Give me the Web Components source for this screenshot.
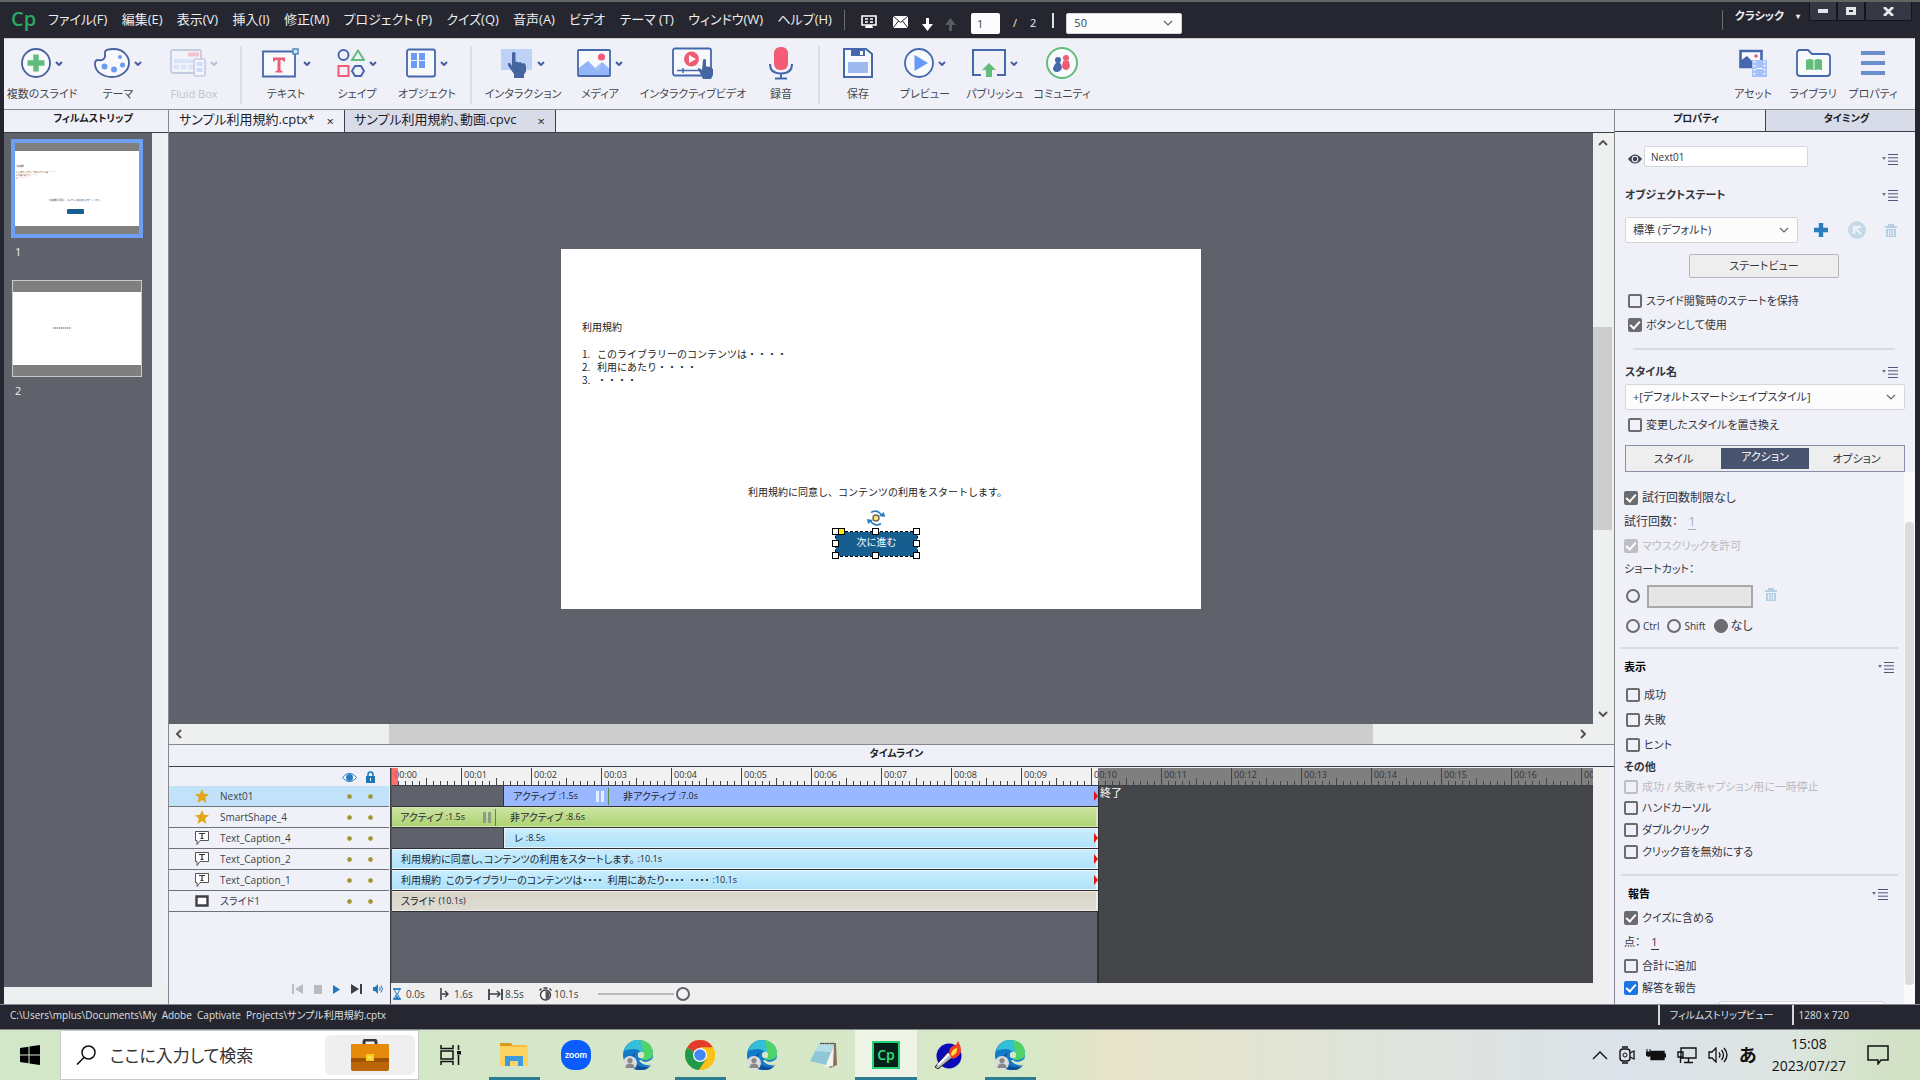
<!DOCTYPE html>
<html lang="ja">
<head>
<meta charset="utf-8">
<title>Captivate</title>
<style>
    html, body {
        margin: 0;
        height: 100%;
    }

    body {
        display: grid;
        grid-template-rows: minmax(0, 1fr) auto;
        overflow: hidden;
        font: 12px/16px "Open Sans", "Noto Sans CJK JP", sans-serif;
        font-feature-settings: "palt";
        color: #3c3f48;
        --chrome: #25262f;
        --panel: #f0f1f8;
        --panel-off: #d8dbe8;
        --line: #85888f;
        --stage: #5f626a;
    }
</style>
</head>
<body>
<editor-window></editor-window>
<task-bar></task-bar>

<script>
const icons = {
    // small controls
    chevron: ['0 0 8 5', '<path d="M1 1l3 3 3-3" fill="none" stroke="#46609f" stroke-width="2"/>'],
    down: ['0 0 10 6', '<path d="M1 1l4 4 4-4" fill="none" stroke="#666" stroke-width="1.2"/>'],
    eye: ['0 0 14 10', '<path d="M0 5Q7-4 14 5 7 14 0 5z" fill="#3f4356"/><circle cx="7" cy="5" r="2.8" fill="none" stroke="#f0f1f8" stroke-width="1.1"/>'],
    list: ['0 0 16 11', '<path d="M0 3h4L2 6z" fill="#6d7390"/><path d="M6 .5h10M6 3.8h10M6 7.2h10M6 10.5h10" stroke="#50567a" stroke-width="1"/>'],
    plus: ['0 0 14 14', '<path d="M7 0v14M0 7h14" stroke="#2b7dbd" stroke-width="4.4"/>'],
    reset: ['0 0 18 18', '<circle cx="9" cy="9" r="9" fill="#c3d9e8"/><path d="M6 13V6h7M6 6l7 7" fill="none" stroke="#f0f1f8" stroke-width="2.4"/>'],
    trash: ['0 0 12 13', '<path d="M3 0h6v2h3v2H0V2h3zM1 5h10v8H1z" fill="#b3d0e4"/><path d="M3.5 6v6M6 6v6M8.500 6v6" stroke="#f0f1f8"/>'],
    // title bar
    display: ['0 0 16 14', '<path d="M1 1h14v9H1z" fill="none" stroke="#fff" stroke-width="1.6"/><path d="M4 4h3M9 4h3M4 7h3M9 7h3" stroke="#fff" stroke-width="1.4"/><path d="M5 10h6l1 3H4z" fill="#fff"/>'],
    mail: ['0 0 15 12', '<path d="M0 0h15v12H0z" fill="#fff"/><path d="M0 0l7.500 6.500L15 0M0 12l5.500-7M15 12L9.500 5" fill="none" stroke="#25262f"/>'],
    arrowdown: ['0 0 11 13', '<path d="M4 0h3v6h4l-5.500 7L0 6h4z" fill="#fff"/>'],
    arrowup: ['0 0 11 13', '<path d="M4 13h3V7h4L5.500 0 0 7h4z" fill="#595a62"/>'],
    min: ['0 0 10 4', '<path d="M0 0h10v4H0z" fill="#e4e6ea"/>'],
    max: ['0 0 10 8', '<path d="M1.500 1.500h7v5h-7z" fill="none" stroke="#e4e6ea" stroke-width="3"/>'],
    close: ['0 0 11 9', '<path d="M1 0l9 9M10 0L1 9" stroke="#e4e6ea" stroke-width="2.8"/>'],
    // tool bar
    slides: ['0 0 30 30', '<circle cx="15" cy="15" r="14" fill="#f8f9fd" stroke="#46609f" stroke-width="1.800"/><path d="M15 6.500v17M6.500 15h17" stroke="#62bd7c" stroke-width="5.500"/>'],
    theme: ['0 0 36 30', '<path d="M4 12c4 1 8-1 7-6s5-5 9-5c9 0 15 7 15 14s-7 14-17 14S1 23 1 16c0-3 1-4 3-4z" fill="#f8f9fd" stroke="#46609f" stroke-width="1.800"/><g fill="#6c9bf5"><circle cx="10.500" cy="18.500" r="3"/><circle cx="20" cy="21.500" r="3"/><circle cx="28.500" cy="17" r="2.500"/><circle cx="26" cy="9" r="2"/></g>'],
    fluid: ['0 0 36 28', '<rect x="1" y="1" width="30" height="23" rx="2" fill="#f1f3fa" stroke="#c5cce0" stroke-width="1.800"/><path d="M18 3.500h11v4H18z" fill="#f5c3cb"/><path d="M4 10h26v4H4zM4 16h5v4H4zM11 16h5v4h-5zM18 16h5v4h-5z" fill="#dce5f8"/><rect x="24" y="10" width="11" height="17" rx="2" fill="#f4f6fc" stroke="#c5cce0" stroke-width="1.600"/><path d="M26.500 13h6v4h-6zM26.500 19h6v4h-6z" fill="#cddcf8"/>'],
    text: ['0 0 37 30', '<path d="M1 3.500h32v25H1z" fill="#f8f9fd" stroke="#4468ab" stroke-width="1.800"/><path d="M11 9.500h12v4h-1.500l-1-1.500h-2v10.500l2 .500v1.500h-7V23l2-.500V12h-2l-1 1.500H11z" fill="#ef5d75"/><path d="M31 1h5v5h-5z" fill="#cfe4f5" stroke="#4c8bbd" stroke-width="1.500"/>'],
    shapes: ['0 0 28 28', '<g fill="none" stroke-width="2"><circle cx="6.500" cy="6" r="5" stroke="#4468ab"/><path d="M21 1.500L27 11H15z" stroke="#62bd7c"/><path d="M1.500 17h10v10h-10z" stroke="#ef5d75"/><path d="M18 17h6l3 5-3 5h-6l-3-5z" stroke="#4468ab"/></g>'],
    objects: ['0 0 30 30', '<rect x="1" y="1.500" width="28" height="27" rx="2" fill="#f8f9fd" stroke="#4468ab" stroke-width="1.800"/><path d="M5 5h6v7H5zM13 5h6v7h-6zM5 13h6v7H5zM13 13h6v7h-6z" fill="#6c9bf5"/>'],
    touch: ['0 0 32 30', '<path d="M0 1h31v21H0z" fill="#bed2f8"/><path d="M11 5q2-2 3.500 0v9l1-.500 2 1 2-.500 1.500 1.500 2-.500q2 1 2 3.500v5l-2 3v3.500H13V26l-5-7q-2-3-.500-4t3.500 3z" fill="#44659f"/>'],
    media: ['0 0 34 28', '<rect x="1" y="1" width="32" height="26" rx="1" fill="#f8f9fd" stroke="#4468ab" stroke-width="1.800"/><path d="M2 26V19l9-7 7 7 7-6 7 6v7z" fill="#a5c3fa"/><path d="M11 12l14 14H2v-7zM25 13l7 7v6H20z" fill="#86adf4" opacity=".6"/><circle cx="24.500" cy="8" r="3.600" fill="#ef5d75"/>'],
    video: ['0 0 42 32', '<rect x="1" y="1.500" width="38" height="27" rx="2" fill="#f8f9fd" stroke="#4468ab" stroke-width="1.800"/><circle cx="19.500" cy="12" r="7.500" fill="#ef5d75"/><path d="M17 8v8l7-4z" fill="#fff"/><path d="M5 23.500h24M11 21v5" stroke="#4468ab" stroke-width="1.500"/><path d="M31 13q1.500-2 3 0v7l1-1 1.500 1 1.500-.500 1.500 1.500 1.500 1v6l-2 4h-8l-4-8q-2-3 0-3l3 2z" fill="#44659f"/>'],
    mic: ['0 0 24 33', '<rect x="5" y="0" width="14" height="23" rx="6" fill="#f25c75"/><path d="M1 17c0 6 4 9.500 11 9.500S23 23 23 17M12 26v5M6 31.500h12" fill="none" stroke="#4468ab" stroke-width="2"/>'],
    save: ['0 0 30 30', '<path d="M1 1h22l6 5v23H1z" fill="#f8f9fd" stroke="#4468ab" stroke-width="2"/><path d="M8 1h14v7H8z" fill="#4468ab"/><path d="M17 3h3v4h-3z" fill="#f8f9fd"/><path d="M5 14h20v11H5z" fill="#9db9ee"/>'],
    preview: ['0 0 30 30', '<circle cx="15" cy="15" r="14" fill="#f8f9fd" stroke="#4468ab" stroke-width="1.800"/><path d="M10.500 7v16L24 15z" fill="#6699f8"/>'],
    publish: ['0 0 34 30', '<path d="M9 27H1V2h32v25h-8" fill="none" stroke="#4468ab" stroke-width="2"/><path d="M17 15l7 7h-4v7h-6v-7h-4z" fill="#62bd7c"/>'],
    community: ['0 0 34 32', '<circle cx="17" cy="16" r="15" fill="#f8f9fd" stroke="#62bd7c" stroke-width="2"/><path d="M10 17q3-4 6 0l1 4q-2 4-5 4-4 0-4-4z" fill="#4468ab"/><circle cx="13" cy="13" r="3" fill="#4468ab"/><circle cx="21" cy="11" r="3" fill="#ef5d75"/><path d="M18 14h6l1 5q-1 4-4 4-4-1-4-4z" fill="#ef5d75"/>'],
    asset: ['0 0 29 28', '<path d="M1.500 2h21v16h-21z" fill="#f8f9fd" stroke="#4468ab" stroke-width="2.600"/><path d="M1 18v-6l7-5 5 5v6z" fill="#4468ab"/><circle cx="17" cy="7" r="1.800" fill="#ef5d75"/><path d="M13 11h15v17H13z" fill="#a5c3fa"/><path d="M15.500 12v15M25.500 12v15" stroke="#fff" stroke-width="1.800" stroke-dasharray="1.500 2.500"/><path d="M17.500 19.500h6" stroke="#fff"/>'],
    library: ['0 0 35 28', '<path d="M1 4q0-3 3-3h8l4 4h15q3 0 3 3v16q0 3-3 3H4q-3 0-3-3z" fill="#f8f9fd" stroke="#4468ab" stroke-width="1.800"/><path d="M10 11q4-2 7.500 0v10q-4-1-7.500 0zM18.500 11q4-2 7.500 0v10q-4-1-7.500 0z" fill="#62bd7c"/>'],
    props: ['0 0 24 24', '<path d="M0 2h24M0 12h24M0 22h24" stroke="#698ecb" stroke-width="4"/>'],
    // timeline
    eyeblue: ['0 0 15 11', '<path d="M.500 5.500Q7.500-3 14.500 5.500 7.500 14 .500 5.500z" fill="#fff" stroke="#2b7dbd"/><circle cx="7.500" cy="5.500" r="3.500" fill="#2b7dbd"/>'],
    lock: ['0 0 9 12', '<path d="M0 5h9v7H0z" fill="#1f76b5"/><path d="M2 5V3.500q0-2.500 2.500-2.500T7 3.500V5" fill="none" stroke="#1f76b5" stroke-width="1.500"/><path d="M4.500 7v3" stroke="#fff"/>'],
    star: ['0 0 14 14', '<path d="M7 0l2 4.800 5 .4-3.800 3.300L11.400 14 7 11l-4.400 3 1.200-5.500L0 5.200l5-.4z" fill="#e3a51a"/>'],
    caption: ['0 0 14 14', '<path d="M.500.500h13v9H5l-3 4v-4H.500z" fill="#fff" stroke="#555"/><path d="M4 2.500h6M7 2.500v5M5.500 7.500h3" stroke="#333" stroke-width="1.200"/>'],
    frame: ['0 0 14 12', '<path d="M1.500 1.500h11v9h-11z" fill="#fff" stroke="#3c3f48" stroke-width="2.400"/>'],
    first: ['0 0 11 10', '<path d="M1 0v10" stroke="#b9bbc1" stroke-width="2"/><path d="M11 0v10L3 5z" fill="#b9bbc1"/>'],
    stop: ['0 0 8 9', '<path d="M0 0h8v9H0z" fill="#b9bbc1"/>'],
    play: ['0 0 7 9', '<path d="M0 0l7 4.500L0 9z" fill="#2079c0"/>'],
    last: ['0 0 11 10', '<path d="M10 0v10" stroke="#3c3f48" stroke-width="2"/><path d="M0 0v10l8-5z" fill="#3c3f48"/>'],
    sound: ['0 0 11 10', '<path d="M0 3h2l3-3v10L2 7H0z" fill="#2079c0"/><path d="M6.500 3q1.500 2 0 4M8 1.500q3 3.500 0 7" fill="none" stroke="#2079c0"/>'],
    hourglass: ['0 0 8 12', '<path d="M0 1h8M0 11h8" stroke="#2079c0" stroke-width="1.600"/><path d="M1 1h6L4.500 6 7 11H1l2.500-5z" fill="none" stroke="#2079c0"/><path d="M4 7l2 4H2z" fill="#2079c0"/>'],
    starts: ['0 0 9 12', '<path d="M1 0v12" stroke="#3c3f48" stroke-width="1.600"/><path d="M2 6h5M5 3l3 3-3 3" fill="none" stroke="#3c3f48" stroke-width="1.400"/>'],
    length: ['0 0 15 12', '<path d="M1 1v11M14 1v11" stroke="#3c3f48" stroke-width="1.800"/><path d="M2 6h9M9 3l3 3-3 3" fill="none" stroke="#3c3f48" stroke-width="1.400"/>'],
    watch: ['0 0 13 14', '<circle cx="6.500" cy="8" r="5" fill="#fff" stroke="#3c3f48" stroke-width="1.400"/><path d="M6.500 8V4q4 0 4 4t-4 4z" fill="#555"/><path d="M4.500 1h4M.500 3.500l2-2M12.500 3.500l-2-2" stroke="#3c3f48" stroke-width="1.400"/>'],
    rotate: ['0 0 20 16', '<circle cx="10" cy="8" r="3" fill="#ffe56b" stroke="#666" stroke-width="1.400"/><path d="M5 2.500q6-4 11 3M15 13.500q-6 4-11-3" fill="none" stroke="#2b7dbd" stroke-width="1.600"/><path d="M13 6l6 1-1-5zM7 10l-6-1 1 5z" fill="#2b7dbd"/>'],
    // task bar
    windows: ['0 0 20 20', '<path d="M0 3l8.500-1.200v7.700H0zM9.500 1.600L20 0v9.500H9.500zM0 10.500h8.500v7.700L0 17zM9.500 10.500H20V20L9.500 18.400z" fill="#000"/>'],
    search: ['0 0 20 20', '<circle cx="12.500" cy="7.500" r="6.500" fill="none" stroke="#111" stroke-width="1.500"/><path d="M8 12.500L1 19.500" stroke="#111" stroke-width="1.600"/>'],
    bag: ['0 0 38 32', '<path d="M13 5V3q0-2 2-2h8q2 0 2 2v2" fill="none" stroke="#343a44" stroke-width="3"/><rect y="5" width="38" height="27" rx="2" fill="#b96508"/><path d="M0 7q0-2 2-2h34q2 0 2 2v12H0z" fill="#e68a0c"/><path d="M0 19h38v4H0z" fill="#9d5204"/><path d="M15 15h8v7h-8z" fill="#f7cc1b"/><path d="M17.500 17.500h3v2h-3z" fill="#fbe98a"/>'],
    taskview: ['0 0 22 20', '<path d="M1 0v3.500h12V0M1 20v-3.500h12V20M1 6h12v8H1zM18.500 0v5M18.500 10v10" fill="none" stroke="#111" stroke-width="1.500"/><path d="M17 6h4v3.500h-4z" fill="#111"/>'],
    explorer: ['0 0 28 24', '<path d="M0 0h11l2 3H0z" fill="#d59a17"/><path d="M0 3h28v20H0z" fill="#fcd362"/><path d="M12 2h15v2H12z" fill="#f5be3c"/><path d="M5 13h18v10h-5v-5h-8v5H5z" fill="#3b9bdc"/>'],
    zoom: ['0 0 30 30', '<rect width="30" height="30" rx="13" fill="#0b5cff"/><text x="15" y="18" text-anchor="middle" font-family="Lato, sans-serif" font-weight="700" font-size="9" fill="#fff">zoom</text>'],
    edge: ['0 0 30 30', '<circle cx="15" cy="15" r="15" fill="#1479c8"/><path d="M1 11C4 3 10 0 15 0c9 0 15 6 15 13 0 5-4 7-8 7-3 0-5-1-4-3 2-3-1-8-7-8-5 0-8 1-10 2z" fill="#33c0d8"/><path d="M17 .200C25 1 30 6 30 13c0 5-4 7-8 7-3 0-5-1-4-3 3-4 2-11-1-16.800z" fill="#4fd268"/><path d="M13 12c-4 5-2 14 7 15 4 .500 7-1 8.500-3-3 7-11 7-15 5.500-7-3-9-12-.500-17.500z" fill="#0f4f9c"/><path d="M18 20c3 3 9 2 12-2l-1 6c-4 2-11 1-13-4z" fill="#d3e7c8"/><circle cx="18" cy="15" r="3.200" fill="#d3e7c8"/><circle cx="7" cy="23" r="7" fill="#dcdcdc"/><circle cx="7" cy="20.500" r="2.600" fill="#888"/><path d="M2.500 28q0-4.500 4.500-4.500t4.500 4.500z" fill="#888"/>'],
    chrome: ['0 0 30 30', '<circle cx="15" cy="15" r="15" fill="#fbc116"/><path d="M15 15L2 7.500A15 15 0 0 1 28 7.500H15z" fill="#e33b2e"/><path d="M2 7.500A15 15 0 0 0 14 30l7.500-11.500L15 15z" fill="#229a4b"/><path d="M15 7.500h13.100A15 15 0 0 1 14 30l8-11z" fill="#fbc116"/><circle cx="15" cy="15" r="7" fill="#fff"/><circle cx="15" cy="15" r="5.800" fill="#4285f4"/>'],
    notepad: ['0 0 28 26', '<path d="M10 1h16l1 22-7 3z" fill="#8a7258"/><path d="M24 3l-1 21-9 1z" fill="#f3f3ee"/><path d="M9 2h15l-8 21-16-4z" fill="#8fc7d6"/><path d="M9 2h15l-3 8-16-1z" fill="#b5dfe6"/><path d="M10 1.500h15" stroke="#555" stroke-width="1.500" stroke-dasharray="1.500 1"/>'],
    cp: ['0 0 28 28', '<path d="M1 1h26v26H1z" fill="#06211a" stroke="#25d276" stroke-width="2"/><text x="14" y="19" text-anchor="middle" font-family="Open Sans, sans-serif" font-weight="600" font-size="14" fill="#2be07f">Cp</text>'],
    torch: ['0 0 28 28', '<circle cx="15" cy="15" r="12.500" fill="#0a0ab8"/><path d="M1 26l13-15 5 5L4 28z" fill="#b9b9c0" stroke="#222"/><path d="M4 24l11-11" stroke="#fff" stroke-width="2"/><path d="M15 12q0-7 7-8l2-4q3 5 3 9t-4 7-5 1z" fill="#f1411f"/><path d="M17 13q1-5 6-6 1 5-5 8z" fill="#fde14a"/>'],
    up: ['0 0 16 9', '<path d="M1 8l7-7 7 7" fill="none" stroke="#111" stroke-width="1.400"/>'],
    meet: ['0 0 16 18', '<rect x="1" y="3" width="10" height="12" rx="3" fill="none" stroke="#111" stroke-width="1.400"/><circle cx="6" cy="9" r="2" fill="none" stroke="#111"/><path d="M11 7l4-2v8l-4-2M3 1h6M3 17h6" fill="none" stroke="#111" stroke-width="1.300"/>'],
    battery: ['0 0 20 14', '<path d="M5 3.500h13v8H5z" fill="#111" stroke="#111" stroke-width="1.400"/><path d="M18 6h2v3h-2zM1 1v3M4 1v3M0 4h5v3q-2.500 3-5 0z" fill="#111" stroke="#111"/>'],
    network: ['0 0 20 18', '<path d="M4 2h15v10H4zM11.500 12v4M7 16.500h9M1 6h5v5H1zM3.500 11v6" fill="none" stroke="#111" stroke-width="1.400"/>'],
    volume: ['0 0 20 16', '<path d="M1 5h3l4-4v14l-4-4H1z" fill="none" stroke="#111" stroke-width="1.300"/><path d="M11 5.500q2 2.500 0 5M13.500 3q4 5 0 10M16 1q6 7 0 14" fill="none" stroke="#111" stroke-width="1.300"/>'],
    note: ['0 0 22 20', '<path d="M1 1h20v14h-7l-3 4v-4H1z" fill="none" stroke="#111" stroke-width="1.500"/>']
}

// Every element here is static markup plus styles, so one helper builds them all.
const define = (name, css, html, connected) => {
    const template = document.createElement('template')
    template.innerHTML = `<style>* { box-sizing: border-box; } button, input, select { font: inherit; font-feature-settings: inherit; color: inherit; margin: 0; } button { border: 0; padding: 0; background: none; }${css}</style>${html}`

    window.customElements.define(name, class extends HTMLElement {
        constructor() {
            super()

            this
                .attachShadow({ mode: 'open' })
                .appendChild(template.content.cloneNode(true))
        }

        connectedCallback() {
            if (connected) connected(this, this.shadowRoot)
        }
    })
}

define('ui-icon', `
    :host { display: inline-flex; flex: none; }
    svg { display: block; }
`, '<svg xmlns="http://www.w3.org/2000/svg" aria-hidden="true"></svg>', (host, root) => {
    const [box, shapes] = icons[host.getAttribute('name')]
    const svg = root.querySelector('svg')
    svg.setAttribute('viewBox', box)
    svg.setAttribute('width', box.split(' ')[2])
    svg.setAttribute('height', box.split(' ')[3])
    svg.innerHTML = shapes
})

define('drop-down', `
    :host { display: grid; height: 26px; align-items: center; }
    select, ui-icon { grid-area: 1 / 1; }
    select {
        appearance: none;
        width: 100%;
        height: 100%;
        padding: 0 24px 0 7px;
        background: #fcfcfd;
        border: 1px solid #d5d6dc;
        border-radius: 2px;
    }
    ui-icon { justify-self: end; margin-right: 9px; pointer-events: none; }
`, '<select><option></option></select><ui-icon name="down"></ui-icon>', (host, root) => {
    root.querySelector('option').textContent = host.getAttribute('value')
    root.querySelector('select').setAttribute('aria-label', host.getAttribute('label'))
})

define('check-row', `
    :host { display: flex; align-items: center; height: 24px; }
    label { display: flex; align-items: center; gap: 4px; white-space: nowrap; }
    input {
        appearance: none;
        display: grid;
        place-items: center;
        flex: none;
        width: 14px;
        height: 14px;
        border: 2px solid #6b6c70;
        border-radius: 2px;
    }
    input:checked { background: #6b6c70; }
    input:checked::after {
        content: "";
        width: 8px;
        height: 4px;
        border: solid #fff;
        border-width: 0 0 2px 2px;
        transform: translateY(-1px) rotate(-48deg);
    }
    :host([accent]) input { background: #1b74e0; border-color: #1b74e0; }
    :host([disabled]) { color: #b9bac0; }
    :host([disabled]) input { border-color: #bebfc4; }
    :host([disabled]) input:checked { background: #bebfc4; }
`, '<label><input type="checkbox"><slot></slot></label>', (host, root) => {
    const input = root.querySelector('input')
    input.checked = host.hasAttribute('checked')
    input.disabled = host.hasAttribute('disabled')
})

define('menu-bar', `
    :host {
        display: flex;
        height: 38px;
        padding-left: 11px;
        border-top: 2px solid #5f6763;
        background: var(--chrome);
        color: #eceef2;
    }
    .logo { width: 37px; font: 600 20px/34px "Open Sans", sans-serif; color: #2ba862; }
    nav { display: flex; justify-content: space-between; align-items: center; width: 784px; height: 34px; font-size: 13px; }
    nav button { white-space: nowrap; }
    .tools { display: flex; align-items: center; font-size: 11px; }
    .rule { width: 1px; height: 20px; background: #6d6e76; }
    .rule.bright { width: 2px; height: 15px; background: #dedfe3; }
    .tools ui-icon { margin-top: 4px; }
    input { width: 29px; height: 21px; padding: 0 6px; border: 0; border-radius: 2px; background: #fcfcfd; color: #3c3f48; }
    .page { display: flex; align-items: center; gap: 13px; margin: 6px 16px 0 15px; }
    drop-down { width: 116px; height: 21px; margin: 6px 0 0 12px; color: #3c3f48; }
    .right { display: flex; margin-left: auto; gap: 9px; }
    .mode { display: flex; align-items: center; gap: 12px; height: 28px; padding-left: 12px; font-size: 11px; font-weight: 600; }
    .mode span { font-size: 8px; }
    .window { display: flex; margin-right: 8px; }
    .window button { width: 28px; height: 19px; border: solid #15161b; border-width: 0 1px 1px; background: #353842; display: grid; place-items: center; }
    .window button:last-child { width: 47px; }
`, `
    <span class="logo">Cp</span>
    <nav>
        <button>ファイル(F)</button><button>編集(E)</button><button>表示(V)</button>
        <button>挿入(I)</button><button>修正(M)</button><button>プロジェクト (P)</button>
        <button>クイズ(Q)</button><button>音声(A)</button><button>ビデオ</button>
        <button>テーマ (T)</button><button>ウィンドウ(W)</button><button>ヘルプ(H)</button>
    </nav>
    <div class="tools">
        <span class="rule" style="margin: 0 16px 0 12px"></span>
        <ui-icon name="display"></ui-icon>
        <ui-icon name="mail" style="margin-left: 16px"></ui-icon>
        <ui-icon name="arrowdown" style="margin-left: 14px; padding-top: 4px"></ui-icon>
        <ui-icon name="arrowup" style="margin-left: 12px; padding-top: 4px"></ui-icon>
        <span class="page"><input value="1" aria-label="スライド"><span>/</span><span>2</span></span>
        <span class="rule bright"></span>
        <drop-down label="倍率" value="50"></drop-down>
    </div>
    <div class="right">
        <span class="rule" style="margin: 8px -9px 0 0"></span>
        <button class="mode">クラシック<span>▾</span></button>
        <div class="window">
            <button aria-label="最小化"><ui-icon name="min"></ui-icon></button>
            <button aria-label="最大化"><ui-icon name="max"></ui-icon></button>
            <button aria-label="閉じる"><ui-icon name="close"></ui-icon></button>
        </div>
    </div>
`)

define('tool-button', `
    :host { display: block; flex: none; }
    button { display: flex; flex-direction: column; align-items: center; width: 100%; white-space: nowrap; }
    .icon { display: flex; align-items: center; justify-content: center; gap: 4px; height: 34px; }
    .label { margin-top: 6px; font-size: 11px; }
    :host([faded]) { color: #bfc2cd; }
    :host([faded]) .chevron { opacity: .35; }
`, '<button><span class="icon"></span><span class="label"><slot></slot></span></button>', (host, root) => {
    root.querySelector('.icon').innerHTML =
        `<ui-icon name="${host.getAttribute('icon')}"></ui-icon>` +
        (host.hasAttribute('menu') ? '<ui-icon class="chevron" name="chevron"></ui-icon>' : '')
})

define('tool-bar', `
    :host { display: flex; height: 71px; padding-top: 7px; border-top: 1px solid #c9c9c4; background: var(--panel); color: #45474f; }
    i { flex: none; width: 2px; height: 58px; margin: 0 8px; background: #dcdde0; }
    .w58 { width: 58px; } .w60 { width: 60px; } .w66 { width: 66px; } .w68 { width: 68px; } .w70 { width: 70px; }
    .w72 { width: 72px; } .w74 { width: 74px; } .w76 { width: 76px; } .w86 { width: 86px; } .w118 { width: 118px; }
    .push { margin-left: auto; }
`, `
    <tool-button class="w76" icon="slides" menu>複数のスライド</tool-button>
    <tool-button class="w76" icon="theme" menu>テーマ</tool-button>
    <tool-button class="w76" icon="fluid" menu faded>Fluid Box</tool-button>
    <i></i>
    <tool-button class="w72" icon="text" menu>テキスト</tool-button>
    <tool-button class="w70" icon="shapes" menu>シェイプ</tool-button>
    <tool-button class="w70" icon="objects" menu>オブジェクト</tool-button>
    <i></i>
    <tool-button class="w86" icon="touch" menu>インタラクション</tool-button>
    <tool-button class="w68" icon="media" menu>メディア</tool-button>
    <tool-button class="w118" icon="video">インタラクティブビデオ</tool-button>
    <tool-button class="w58" icon="mic">録音</tool-button>
    <i></i>
    <tool-button class="w60" icon="save">保存</tool-button>
    <tool-button class="w74" icon="preview" menu>プレビュー</tool-button>
    <tool-button class="w66" icon="publish" menu>パブリッシュ</tool-button>
    <tool-button class="w68" icon="community">コミュニティ</tool-button>
    <tool-button class="w60 push" icon="asset">アセット</tool-button>
    <tool-button class="w60" icon="library">ライブラリ</tool-button>
    <tool-button class="w60" style="margin-right: 12px" icon="props">プロパティ</tool-button>
`)

define('film-strip', `
    :host { display: grid; grid-template-rows: 23px minmax(0, 1fr) 17px; background: var(--panel); border-right: 1px solid var(--line); }
    h2 { margin: 0; padding-left: 14px; font-size: 10px; line-height: 17px; text-align: center; color: #1b1d24; border-bottom: 1px solid #3c3f48; }
    .body { display: grid; grid-template-columns: minmax(0, 1fr) 12px 4px; }
    .slides { background: var(--stage); padding: 6px 9px 0 7px; }
    .track { background: #eeeff0; }
    button { display: block; position: relative; width: 100%; height: 99px; border: 4px solid #6f9ff3; background: #7f7f7f; padding: 8px 0; }
    button + p + button { border: 1px solid #c9cacd; padding: 11px 0; height: 97px; width: 130px; margin-left: 1px; }
    .page { display: block; height: 100%; background: #fff; position: relative; font: 2px/3px "Noto Sans CJK JP", sans-serif; font-feature-settings: normal; text-align: left; color: #333; }
    .page span { position: absolute; white-space: nowrap; }
    .mini { left: 52px; top: 58px; width: 17px; height: 5px; border-radius: 1px; background: #165d90; }
    .dots { left: 40px; top: 35px; width: 18px; height: 2px; background: repeating-linear-gradient(90deg, #aaa 0 1px, #ddd 1px 2px); }
    p { margin: 0; padding: 6px 4px 20px; font-size: 11px; color: #eceef2; }
    .foot { background: #eeeff0; }
`, `
    <h2>フィルムストリップ</h2>
    <div class="body">
        <div class="slides">
            <button aria-label="スライド 1"><span class="page">
                <span style="left: 1px; top: 14px">利用規約</span>
                <span style="left: 1px; top: 20px">1. このライブラリーのコンテンツは・・・・<br>2. 利用にあたり・・・・<br>3. ・・・・</span>
                <span style="left: 34px; top: 48px">利用規約に同意し、コンテンツの利用をスタートします。</span>
                <span class="mini"></span>
            </span></button>
            <p>1</p>
            <button aria-label="スライド 2"><span class="page"><span class="dots"></span></span></button>
            <p>2</p>
        </div>
        <div class="track"></div>
    </div>
    <div class="foot"></div>
`)

define('stage-view', `
    :host { display: grid; grid-template: 23px minmax(0, 1fr) 20px / minmax(0, 1fr) 21px; background: var(--panel); }
    .tabs { grid-column: 1 / 3; display: flex; border-bottom: 1px solid #3c3f48; font-size: 13px; line-height: 19px; color: #1f2128; }
    .tabs button { display: flex; justify-content: space-between; min-width: 176px; padding: 0 10px; white-space: nowrap; border-right: 1px solid #3c3f48; }
    .tabs button + button { min-width: 211px; background: var(--panel-off); padding-left: 9px; }
    .tabs span { line-height: 22px; }
    .canvas { display: grid; place-items: center; background: var(--stage); overflow: hidden; }
    .slide { position: relative; width: 640px; height: 360px; background: #fff; font: 10px/13px "Noto Sans CJK JP", sans-serif; font-feature-settings: normal; color: #222; }
    .slide > * { position: absolute; margin: 0; white-space: nowrap; }
    .title { left: 21px; top: 71px; }
    ol { left: 21px; top: 98px; padding: 0 0 0 15px; list-style: none; }
    ol li span { display: inline-block; width: 15px; margin-left: -15px; }
    .agree { left: 187px; top: 236px; }
    .rotate { left: 305px; top: 261px; }
    .next { left: 275px; top: 283px; width: 81px; height: 24px; background: #165d90; outline: 1px dashed #000; color: #fff; padding-bottom: 4px; }
    .handle { width: 7px; height: 7px; border: 1px solid #000; background: #fff; }
    .bar { display: flex; background: #eeefef; }
    .v { flex-direction: column; }
    .bar b { background: #cdcdcd; }
    .arrow { flex: none; width: 20px; height: 20px; display: grid; place-items: center; }
`, `
    <div class="tabs"><button>サンプル利用規約.cptx* <span>×</span></button><button>サンプル利用規約、動画.cpvc <span>×</span></button></div>
    <div class="canvas">
        <div class="slide">
            <p class="title">利用規約</p>
            <ol>
                <li><span>1.</span>このライブラリーのコンテンツは・・・・</li>
                <li><span>2.</span>利用にあたり・・・・</li>
                <li><span>3.</span>・・・・</li>
            </ol>
            <p class="agree">利用規約に同意し、コンテンツの利用をスタートします。</p>
            <ui-icon class="rotate" name="rotate"></ui-icon>
            <button class="next">次に進む</button>
        </div>
    </div>
    <div class="bar v">
        <span class="arrow"><svg width="10" height="6"><path d="M1 5l4-4 4 4" fill="none" stroke="#555" stroke-width="2"/></svg></span>
        <span style="flex: 174"></span><b style="flex: 202; margin-right: 2px"></b><span style="flex: 174"></span>
        <span class="arrow"><svg width="10" height="6"><path d="M1 1l4 4 4-4" fill="none" stroke="#555" stroke-width="2"/></svg></span>
    </div>
    <div class="bar">
        <span class="arrow"><svg width="6" height="10"><path d="M5 1L1 5l4 4" fill="none" stroke="#555" stroke-width="2"/></svg></span>
        <span style="flex: 200"></span><b style="flex: 984"></b><span style="flex: 200"></span>
        <span class="arrow"><svg width="6" height="10"><path d="M1 1l4 4-4 4" fill="none" stroke="#555" stroke-width="2"/></svg></span>
    </div>
    <div class="bar"></div>
`, (host, root) => {
    const slide = root.querySelector('.slide')
    const xs = [271, 311, 352]
    const ys = [279, 291, 303]
    const add = (x, y, color) => {
        const handle = document.createElement('span')
        handle.className = 'handle'
        handle.style.cssText = `left: ${x}px; top: ${y}px; background: ${color}`
        slide.appendChild(handle)
    }
    add(277, 279, '#f7ec13')
    xs.forEach(x => ys.forEach(y => {
        if (x !== 311 || y !== 291) add(x, y, '#fff')
    }))
})

define('time-line', `
    :host {
        --sec: 70px;
        display: grid;
        grid-template: 23px minmax(0, 1fr) 21px / 222px minmax(0, 1fr) 21px;
        border-top: 1px solid var(--line);
        background: var(--panel);
    }
    h2 { grid-column: 1 / 4; margin: 0 0 1px; padding-left: 10px; font-size: 10px; line-height: 17px; text-align: center; color: #1b1d24; border-bottom: 1px solid #3c3f48; }
    .names { border-right: 1px solid #3c3f48; }
    .name { display: grid; grid-template-columns: 51px minmax(0, 1fr) 21px 21px 8px; align-items: center; height: 21px; border-bottom: 1px solid #6f7279; font-size: 10px; margin-right: 1px; }
    .name > ui-icon { justify-self: end; margin-right: 11px; }
    .name.head { height: 18px; border: 0; }
    .name.head > ui-icon { justify-self: center; margin: 0; }
    .name.on { background: #c2e2fa; }
    .name i { justify-self: center; width: 5px; height: 5px; border-radius: 50%; background: #8f9840; border: 1px solid #b7a13c; }
    .lanes { position: relative; overflow: hidden; background: linear-gradient(90deg, var(--stage) 706px, #2f3034 706px 708px, #454649 708px); }
    .ruler {
        display: flex;
        height: 18px;
        font-size: 9px;
        line-height: 13px;
        color: #333;
        border-bottom: 1px solid #3c3f48;
        background:
            linear-gradient(90deg, #444 1px, transparent 1px) 0 100% / 7px 4px repeat-x,
            linear-gradient(90deg, #444 1px, transparent 1px) 0 100% / 35px 7px repeat-x,
            linear-gradient(90deg, #444 1px, transparent 1px) 0 100% / 70px 100% repeat-x,
            linear-gradient(90deg, #f1f1f2 707px, #7f7f80 707px);
    }
    .ruler span { flex: none; width: var(--sec); padding-left: 3px; }
    .lane { display: flex; width: calc(var(--sec) * 10.1); height: 21px; border-bottom: 1px solid #2f3034; }
    .clip { flex: 1; display: flex; align-items: center; padding-left: 9px; position: relative; font-size: 10px; color: #1c2430; white-space: nowrap; border: 1px solid #e8f4fa; border-right-width: 2px; }
    .clip > span { font-size: 9px; margin-left: 3px; }
    .lane.late::before { content: ""; width: calc(var(--sec) * 1.6); border-right: 1px solid #2f3034; }
    .blue .clip { background: #9ab8ff; border-color: #9ab8ff; }
    .green .clip { background: linear-gradient(#cbe3a2, #aed472); border-color: #d6e8b6; }
    .sky .clip { background: linear-gradient(#c9edfd, #aee2f9); }
    .sand .clip { background: linear-gradient(#d8d4c7, #dedcd2); border-color: #ecebe4; }
    .active { display: flex; align-items: center; width: 105px; margin: 0 14px 0 -10px; padding-left: 9px; height: 17px; border-right: 1px solid #5c8a4a; }
    .active em { font-style: normal; font-size: 9px; margin-left: 3px; }
    .active b { width: 8px; height: 11px; margin: 0 4px 0 auto; border: solid #e6eeff; border-width: 0 3px; }
    .green .active b { border-color: #8f9b8a; }
    .edge::after { content: ""; position: absolute; right: -2px; top: 4px; border: solid transparent; border-width: 5px 0 5px 4px; border-left-color: #e01515; }
    .head-mark { position: absolute; left: 0; top: 0; width: 7px; height: 17px; background: #ff4f4fcc; }
    .head-line { position: absolute; left: 0; top: 17px; bottom: 0; width: 1px; background: #b03030; }
    .end { position: absolute; left: 709px; top: 17px; color: #fff; font-size: 11px; }
    .controls { display: flex; justify-content: flex-end; align-items: center; gap: 11px; padding: 0 6px 8px 0; border-right: 1px solid #3c3f48; }
    .info { display: flex; align-items: center; font-size: 10px; background: #efeff0; color: #3c3f48; padding-left: 2px; }
    .info ui-icon { margin-right: 5px; }
    .info span { width: 34px; }
    input { appearance: none; width: 92px; height: 16px; margin-left: 16px; background: linear-gradient(#b9bac0, #b9bac0) 0 50% / 76px 2px no-repeat; }
    input::-webkit-slider-thumb { appearance: none; width: 14px; height: 14px; border: 2px solid #5f626a; border-radius: 50%; background: #f4f4f6; }
    .side { background: linear-gradient(90deg, #efeff0 16px, #f0f1f8 16px); }
`, `
    <h2>タイムライン</h2>
    <div class="names"></div>
    <div class="lanes">
        <div class="ruler"></div>
        <div class="lane late blue"><div class="clip edge"><div class="active">アクティブ <em>:1.5s</em><b></b></div>非アクティブ<span>:7.0s</span></div></div>
        <div class="lane green"><div class="clip"><div class="active">アクティブ <em>:1.5s</em><b></b></div>非アクティブ<span>:8.6s</span></div></div>
        <div class="lane late sky"><div class="clip edge">レ<span>:8.5s</span></div></div>
        <div class="lane sky"><div class="clip edge">利用規約に同意し、コンテンツの利用をスタートします。 <span>:10.1s</span></div></div>
        <div class="lane sky"><div class="clip edge">利用規約&ensp;このライブラリーのコンテンツは・・・・&ensp;利用にあたり・・・・&ensp;・・・・ <span>:10.1s</span></div></div>
        <div class="lane sand"><div class="clip">スライド<span>(10.1s)</span></div></div>
        <div class="end">終了</div>
        <div class="head-mark"></div>
        <div class="head-line"></div>
    </div>
    <div class="side"></div>
    <div class="controls">
        <button aria-label="先頭"><ui-icon name="first"></ui-icon></button><button aria-label="停止"><ui-icon name="stop"></ui-icon></button>
        <button aria-label="再生"><ui-icon name="play"></ui-icon></button><button aria-label="末尾"><ui-icon name="last"></ui-icon></button>
        <button aria-label="音"><ui-icon name="sound"></ui-icon></button>
    </div>
    <div class="info">
        <ui-icon name="hourglass"></ui-icon><span>0.0s</span>
        <ui-icon name="starts"></ui-icon><span>1.6s</span>
        <ui-icon name="length" style="margin-right: 2px"></ui-icon><span>8.5s</span>
        <ui-icon name="watch" style="margin-right: 2px"></ui-icon><span style="width: 28px">10.1s</span>
        <input type="range" value="100" aria-label="タイムラインの倍率">
    </div>
    <div class="side"></div>
`, (host, root) => {
    const names = [['star', 'Next01'], ['star', 'SmartShape_4'], ['caption', 'Text_Caption_4'],
        ['caption', 'Text_Caption_2'], ['caption', 'Text_Caption_1'], ['frame', 'スライド1']]
    root.querySelector('.names').innerHTML =
        '<div class="name head"><span></span><span></span><ui-icon name="eyeblue"></ui-icon><ui-icon name="lock"></ui-icon></div>' +
        names.map(([icon, text], i) =>
            `<div class="name${i ? '' : ' on'}"><ui-icon name="${icon}"></ui-icon><span>${text}</span><i></i><i></i></div>`).join('')
    root.querySelector('.ruler').innerHTML =
        Array.from({ length: 18 }, (_, i) => `<span>00:${String(i).padStart(2, '0')}</span>`).join('')
})

define('props-panel', `
    :host { display: grid; grid-template-rows: 23px auto minmax(0, 1fr); background: var(--panel); border-left: 1px solid var(--line); color: #33353e; font-size: 11px; overflow: hidden; }
    .tabs { display: grid; grid-template-columns: 1fr 1fr; height: 22px; border-bottom: 1px solid #3c3f48; font-size: 10px; font-weight: 700; color: #1b1d24; }
    .tabs button { padding: 0 0 5px 12px; }
    .tabs button + button { background: var(--panel-off); border-left: 1px solid #3c3f48; }
    .top { padding: 13px 10px 0; }
    .row { display: flex; align-items: center; height: 24px; white-space: nowrap; }
    h3 { margin: 0; font-size: 11px; font-weight: 700; }
    .row > :last-child:is(ui-icon) { margin-left: auto; }
    .top .row ui-icon[name="list"] { margin-right: 7px; }
    hr { height: 2px; margin: 11px 10px 10px 8px; border: 0; background: #d9dada; }
    .id { height: 26px; padding-left: 3px; gap: 2px; }
    .id input { align-self: flex-start; width: 164px; height: 21px; padding: 0 6px; font-size: 10px; border: 1px solid #d5d6dc; border-radius: 2px; background: #fff; }
    .wide { display: block; width: 150px; height: 24px; margin: 11px auto 11px 64px; border: 1px solid #b4b5ba; border-radius: 2px; background: #eeeeef; }
    .top check-row { margin-left: 3px; }
    .segments { display: grid; grid-template-columns: 95px 1fr 95px; height: 27px; margin-top: 8px; padding: 2px 0; border: 1px solid #8b8ea8; background: #eeeeef; }
    .segments .on { background: #47536f; color: #fff; padding-bottom: 3px; }
    .scroll { display: grid; grid-template-columns: minmax(0, 1fr) 11px; overflow: hidden; }
    .body { padding: 14px 6px 0 9px; overflow: hidden; }
    .body hr { margin: 9px 0 6px -3px; }
    .bar { background: #fafafc; padding: 50px 1px 0; }
    .bar b { display: block; height: calc(100% - 19px); border-radius: 4px; background: #dcdcde; }
    .large { font-size: 12px; }
    .num { width: 8px; height: 16px; margin-left: 10px; padding: 0; text-align: center; border: 0; border-bottom: 1px solid currentColor; background: none; border-radius: 0; }
    .num:disabled { color: #a9aab2; }
    input[type="radio"] { appearance: none; flex: none; width: 14px; height: 14px; margin-right: 3px; border: 2px solid #6b6c70; border-radius: 50%; }
    input[type="radio"]:checked { background: #6b6c70; border-width: 1px; }
    .radios { margin-top: 6px; padding-left: 2px; }
    .radios label { display: flex; align-items: center; margin-right: 8px; font-size: 10px; }
    .radios label:last-child { font-size: 12px; }
    .key { height: 23px; width: 106px; margin: 0 12px 0 4px; border: 2px solid #a9a9ac; background: #e6e6e7; }
    .show check-row { height: 25px; margin-left: 2px; }
    .black { color: #000; }
    drop-down.cut { width: 166px; margin: 3px 0 0 95px; }
`, `
    <div class="tabs"><button>プロパティ</button><button>タイミング</button></div>
    <div class="top">
        <div class="row id"><ui-icon name="eye"></ui-icon><input value="Next01" aria-label="名前"><ui-icon name="list"></ui-icon></div>
        <div class="row" style="margin: 11px 0 10px"><h3>オブジェクトステート</h3><ui-icon name="list"></ui-icon></div>
        <div class="row" style="height: 26px">
            <drop-down style="width: 173px" label="ステート" value="標準 (デフォルト)"></drop-down>
            <ui-icon name="plus" style="margin: 0 20px 0 16px"></ui-icon><ui-icon name="reset"></ui-icon>
            <ui-icon name="trash" style="margin-right: 8px"></ui-icon>
        </div>
        <button class="wide">ステートビュー</button>
        <check-row>スライド閲覧時のステートを保持</check-row>
        <check-row checked>ボタンとして使用</check-row>
        <hr>
        <div class="row"><h3>スタイル名</h3><ui-icon name="list"></ui-icon></div>
        <drop-down label="スタイル" value="+[デフォルトスマートシェイプスタイル]"></drop-down>
        <check-row style="margin-top: 3px">変更したスタイルを置き換え</check-row>
        <div class="segments"><button>スタイル</button><button class="on">アクション</button><button>オプション</button></div>
    </div>
    <div class="scroll">
        <div class="body">
            <check-row class="large" checked>試行回数制限なし</check-row>
            <div class="row large"><label for="tries">試行回数：</label><input class="num" id="tries" value="1" disabled></div>
            <check-row checked disabled>マウスクリックを許可</check-row>
            <div class="row" style="height: 22px; margin-bottom: 4px">ショートカット：</div>
            <div class="row" style="padding-left: 2px"><input type="radio" name="key" aria-label="ショートカット"><input class="key" aria-label="キー"><span><ui-icon name="trash"></ui-icon></span></div>
            <div class="row radios">
                <label><input type="radio" name="key">Ctrl</label>
                <label><input type="radio" name="key">Shift</label>
                <label><input type="radio" name="key" checked>なし</label>
            </div>
            <hr>
            <div class="row black"><h3>表示</h3><ui-icon name="list" style="margin-right: 4px"></ui-icon></div>
            <div class="show" style="margin-top: 3px">
                <check-row>成功</check-row><check-row>失敗</check-row><check-row>ヒント</check-row>
            </div>
            <div class="row" style="height: 20px"><h3>その他</h3></div>
            <check-row disabled style="height: 20px">成功 / 失敗キャプション用に一時停止</check-row>
            <check-row style="height: 22px">ハンドカーソル</check-row>
            <check-row style="height: 22px">ダブルクリック</check-row>
            <check-row style="height: 22px">クリック音を無効にする</check-row>
            <hr style="margin-top: 11px">
            <div class="row black" style="padding-left: 4px"><h3>報告</h3><ui-icon name="list" style="margin-right: 10px"></ui-icon></div>
            <check-row checked>クイズに含める</check-row>
            <div class="row"><label for="points">点：</label><input class="num" id="points" value="1"></div>
            <check-row>合計に追加</check-row>
            <check-row checked accent style="height: 20px">解答を報告</check-row>
            <drop-down class="cut" label="解答" value=""></drop-down>
        </div>
        <div class="bar"><b></b></div>
    </div>
`)

define('status-bar', `
    :host { display: flex; align-items: center; height: 26px; padding: 0 71px 4px 10px; border-top: 1px solid var(--line); border-bottom: 1px solid var(--line); background: var(--chrome); color: #dfe1e6; font-size: 10px; }
    span { margin-left: 18px; padding-left: 10px; line-height: 20px; border-left: 2px solid #d5d6da; }
    span:first-of-type { margin-left: auto; }
    span:last-of-type { padding-left: 5px; }
`, 'C:\\Users\\mplus\\Documents\\My&nbsp; Adobe&nbsp; Captivate&nbsp; Projects\\サンプル利用規約.cptx<span>フィルムストリップビュー</span><span>1280 x 720</span>')

define('editor-window', `
    :host { display: grid; grid-template-rows: auto auto minmax(0, 1fr) auto; min-height: 0; background: var(--chrome); }
    tool-bar, .work { margin: 0 5px 0 4px; }
    .work { display: grid; grid-template-columns: 165px minmax(0, 1fr) 301px; min-height: 0; border-top: 1px solid var(--line); }
    .center { display: grid; grid-template-rows: minmax(0, 1fr) 260px; min-height: 0; }
`, `
    <menu-bar></menu-bar>
    <tool-bar></tool-bar>
    <div class="work">
        <film-strip></film-strip>
        <div class="center"><stage-view></stage-view><time-line></time-line></div>
        <props-panel></props-panel>
    </div>
    <status-bar></status-bar>
`)

define('task-item', `
    :host { display: block; width: 62px; }
    button { display: grid; place-items: center; width: 100%; height: 100%; }
    :host([running]) button { background: linear-gradient(#2e7c92, #2e7c92) 50% 100% / 51px 3px no-repeat; }
    :host([active]) button { background: linear-gradient(#2e7c92, #2e7c92) 50% 100% / 100% 3px no-repeat, #edf4e6; }
`, '<button><slot></slot></button>', (host, root) => {
    root.querySelector('button').setAttribute('aria-label', host.getAttribute('label'))
})

define('task-bar', `
    :host { display: flex; height: 50px; background: linear-gradient(90deg, #d2e6c8, #d7e8c7 54%, #e6e3c8 58%, #dfe3d8 70%, #dbe2ea 85%, #dde5e2 93%, #d3e2c6 98%); color: #111; }
    .start { width: 60px; display: grid; place-items: center; }
    .search { display: flex; align-items: center; width: 359px; padding: 0 3px 0 15px; background: #fff; border: 1px solid #c9ccc8; }
    .search input { flex: 1; min-width: 0; margin-left: 14px; padding: 0; border: 0; outline: 0; font-size: 17px; }
    .search input::placeholder { color: #333; opacity: 1; }
    .search .bag { display: grid; place-items: center; width: 90px; height: 40px; border-radius: 6px; background: #efefef; }
    .view { width: 64px; }
    .tray { display: flex; align-items: center; gap: 11px; margin-left: auto; padding-right: 31px; }
    .ime { font-size: 18px; line-height: 24px; font-weight: 600; }
    .clock { padding: 0 10px 0 4px; text-align: center; font-size: 14px; line-height: 22px; }
`, `
    <button class="start" aria-label="スタート"><ui-icon name="windows"></ui-icon></button>
    <div class="search"><ui-icon name="search"></ui-icon><input placeholder="ここに入力して検索" aria-label="検索"><span class="bag"><ui-icon name="bag"></ui-icon></span></div>
    <task-item class="view" label="タスクビュー"><ui-icon name="taskview"></ui-icon></task-item>
    <task-item label="エクスプローラー" running><ui-icon name="explorer"></ui-icon></task-item>
    <task-item label="Zoom"><ui-icon name="zoom"></ui-icon></task-item>
    <task-item label="Edge"><ui-icon name="edge"></ui-icon></task-item>
    <task-item label="Chrome" running><ui-icon name="chrome"></ui-icon></task-item>
    <task-item label="Edge"><ui-icon name="edge"></ui-icon></task-item>
    <task-item label="メモ帳"><ui-icon name="notepad"></ui-icon></task-item>
    <task-item label="Captivate" active><ui-icon name="cp"></ui-icon></task-item>
    <task-item label="ツール"><ui-icon name="torch"></ui-icon></task-item>
    <task-item label="Edge" running><ui-icon name="edge"></ui-icon></task-item>
    <div class="tray">
        <ui-icon name="up"></ui-icon><ui-icon name="meet"></ui-icon><ui-icon name="battery"></ui-icon>
        <ui-icon name="network"></ui-icon><ui-icon name="volume"></ui-icon><span class="ime">あ</span>
        <div class="clock">15:08<br>2023/07/27</div>
        <ui-icon name="note"></ui-icon>
    </div>
`)
</script>
</body>
</html>
